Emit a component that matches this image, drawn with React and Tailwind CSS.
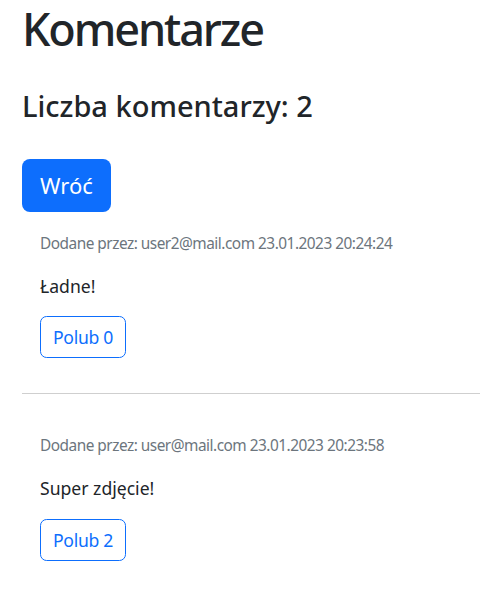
import React from 'react';

const comments = [
  { id: 1, author: 'user2@mail.com', date: '23.01.2023 20:24:24', text: 'Ładne!', likes: 0 },
  { id: 2, author: 'user@mail.com', date: '23.01.2023 20:23:58', text: 'Super zdjęcie!', likes: 2 },
];

const App = () => {
  return (
    <div className="min-h-screen bg-white pl-[22px] pt-[2px] font-['Noto_Sans',sans-serif] text-[#212529]">
      <h1 className="text-[45px] font-medium leading-[1.2] tracking-[-2.1px] m-0">Komentarze</h1>

      <h2 className="mt-[33px] text-[29px] font-medium leading-[1.2]">Liczba komentarzy: 2</h2>

      <button className="mt-[35px] h-[53px] w-[89px] rounded-[8px] bg-[#0d6efd] text-[22px] text-white">
        Wróć
      </button>

      {comments.map((c, i) => (
        <div key={c.id}>
          {i > 0 && <hr className="mt-[35px] border-0 border-t border-[#cfcfcf]" />}
          <div className={`pl-[18px] ${i > 0 ? 'pt-[40px]' : 'pt-[20px]'}`}>
            <p className="text-[15.4px] leading-[1.5] tracking-[-0.5px] text-[#6c757d] mb-[17.6px]">
              Dodane przez: {c.author} {c.date}
            </p>
            <p className="text-[17.6px] leading-[1.5] mb-[17.6px]">{c.text}</p>
            <button className="h-[42px] w-[86px] rounded-[6.6px] border border-[#0d6efd] text-[17.6px] tracking-[-0.3px] text-[#0d6efd]">
              Polub {c.likes}
            </button>
          </div>
        </div>
      ))}
    </div>
  );
};

export default App;
